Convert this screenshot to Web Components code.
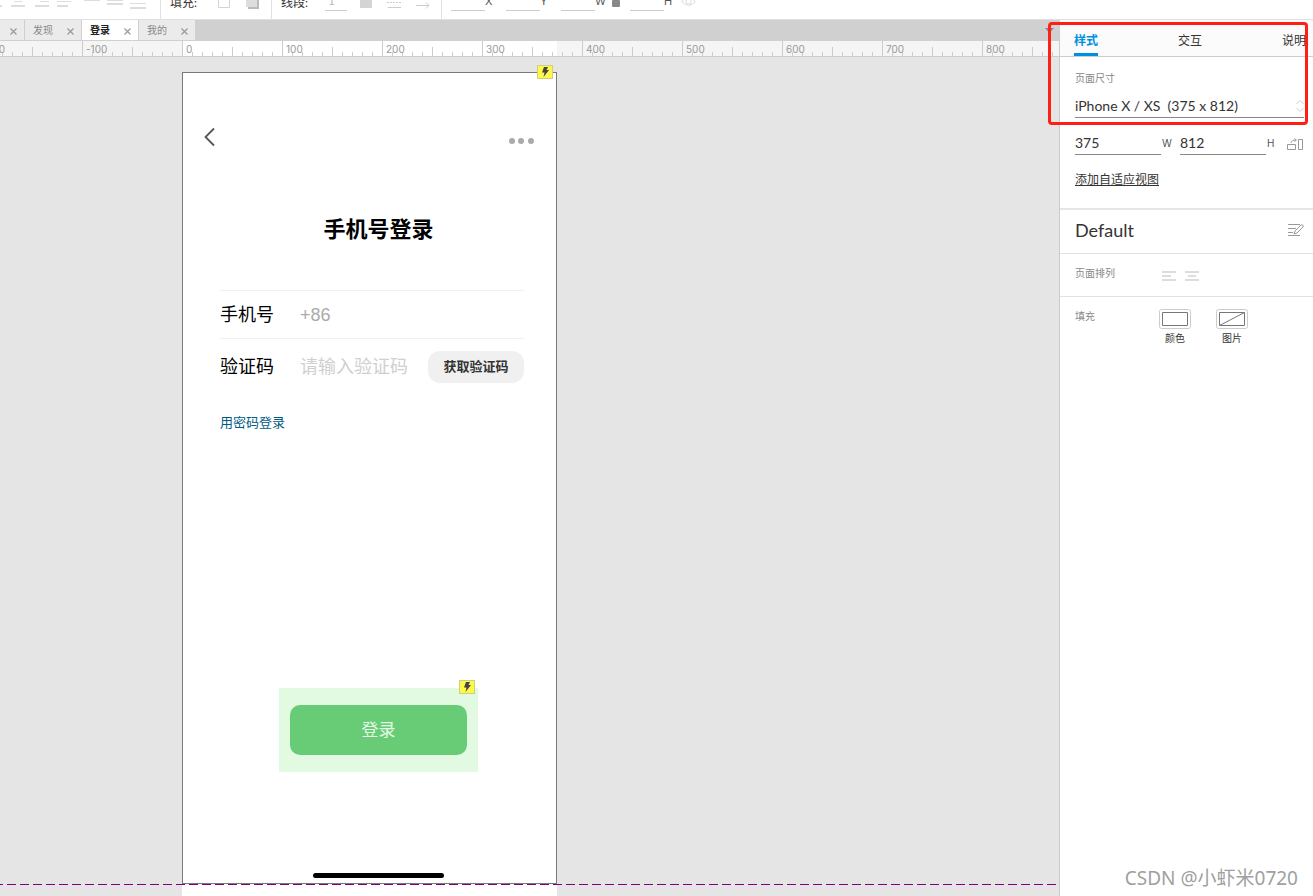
<!DOCTYPE html>
<html lang="zh-CN">
<head>
<meta charset="utf-8">
<title>登录</title>
<style>
  body { margin: 0; background: #fff; color: #333; font: 12px/16px Lato, "Noto Sans CJK SC", sans-serif; }
</style>
</head>
<body>
<editor-app></editor-app>

<script>
const base = `<style>
  *, *::before, *::after { box-sizing: border-box; }
  :host { display: block; box-sizing: border-box; }
  button { font: inherit; color: inherit; background: none; border: 0; padding: 0; margin: 0; cursor: pointer; }
  input, select { font: inherit; color: inherit; background: none; border: 0; padding: 0; margin: 0; outline: 0; min-width: 0; border-radius: 0; }
  svg { display: block; flex: none; }
</style>`;

function define(name, markup, setup) {
  const template = document.createElement('template');
  template.innerHTML = base + markup;
  customElements.define(name, class extends HTMLElement {
    constructor() {
      super();
      this.attachShadow({ mode: 'open' }).append(template.content.cloneNode(true));
    }
    connectedCallback() { if (setup) setup(this, this.shadowRoot); }
  });
}

/* ---------- Toolbar ---------- */
define('tool-group', `<style>
  :host { display: flex; align-items: center; flex: none; height: 32px; border-right: 1px solid #e2e2e2; }
  :host([last]) { border-right: 0; }
</style><slot></slot>`);

define('measure-field', `<style>
  :host { width: 55px; flex: none; }
  label { display: flex; align-items: flex-end; height: 32px; color: #555; }
  input { width: 34px; height: 24px; margin-bottom: 8px; border-bottom: 1px solid #ccc; }
  span { font: 11px/12px Inter, sans-serif; margin-bottom: 12px; }
</style><label><input type="text"><span></span></label>`,
(el, root) => { root.querySelector('span').textContent = el.getAttribute('name'); });

define('tool-bar', `<style>
  :host { display: flex; align-items: flex-end; height: 20px; overflow: hidden; background: #fff; border-bottom: 1px solid #e0e0e0; }
  .label { font-size: 12px; line-height: 16px; }
  .align { width: 161px; gap: 7px; }
  .fill { width: 111px; padding-left: 9px; }
  .line { width: 170px; padding-left: 9px; }
  .size { padding-left: 9px; }
  .fill .label, .line .label { width: 30px; white-space: nowrap; }
  .stroke { align-self: flex-end; width: 22px; height: 20px; margin: 0 0 8px 14px; padding-left: 3px; border-bottom: 1px solid #ccc; color: #bbb; }
  .box { margin-left: 18px; } .shade { margin-left: 15px; }
  .swatch { margin-left: 13px; } .dash { margin-left: 15px; } .arrow { margin-left: 14px; }
  .wide { margin-left: 5px; }
  .lock { margin-left: -4px; margin-right: 9px; }
  .eye { margin-left: -4px; }
</style>
<tool-group class="align">
  <button aria-label="左"><svg width="3" height="32" viewBox="0 -13 3 32" fill="#ddd"><path d="M0 5h2v2H0z"/></svg></button>
  <button aria-label="左对齐"><svg width="16" height="32" viewBox="0 -13 16 32" fill="#ddd"><path d="M4 1h8v1H4zM1 5h14v2H1z"/></svg></button>
  <button aria-label="右对齐"><svg width="16" height="32" viewBox="0 -13 16 32" fill="#ddd"><path d="M7 1h9v1H7zM2 5h14v2H2z"/></svg></button>
  <button aria-label="两端对齐"><svg width="16" height="32" viewBox="0 -13 16 32" fill="#ddd"><path d="M1 1h14v1H1zM1 5h11v2H1z"/></svg></button>
  <button class="wide" aria-label="顶部"><svg width="16" height="32" viewBox="0 -13 16 32" fill="#ddd"><path d="M0 0h16v1H0z"/></svg></button>
  <button aria-label="居中"><svg width="16" height="32" viewBox="0 -13 16 32" fill="#ddd"><path d="M0 0h16v1H0zM0 3h16v2H0z"/></svg></button>
  <button aria-label="底部"><svg width="16" height="32" viewBox="0 -13 16 32" fill="#ddd"><path d="M0 3h16v1H0zM0 7h16v2H0z"/></svg></button>
</tool-group>
<tool-group class="fill">
  <span class="label">填充:</span>
  <button class="box" aria-label="填充颜色"><svg width="13" height="32" viewBox="0 -13 13 32"><path d="M.5-3.5h11v11H.5z" fill="#fff" stroke="#d4d4d4"/></svg></button>
  <button class="shade" aria-label="阴影"><svg width="14" height="32" viewBox="0 -13 14 32"><path d="M2-2h11V9H2z" fill="#bbb"/><path d="M0-4h11V7H0z" fill="#ddd"/></svg></button>
</tool-group>
<tool-group class="line">
  <label class="label" for="stroke">线段:</label>
  <input class="stroke" id="stroke" type="text" value="1">
  <button class="swatch" aria-label="线段颜色"><svg width="12" height="32" viewBox="0 -13 12 32"><path d="M0-4h12V8H0z" fill="#d4d4d4"/></svg></button>
  <button class="dash" aria-label="线段类型"><svg width="15" height="32" viewBox="0 -13 15 32" stroke="#ccc"><path d="M0 2.5h14" stroke-dasharray="2 1"/><path d="M1 7.5h13"/></svg></button>
  <button class="arrow" aria-label="箭头"><svg width="14" height="32" viewBox="0 -13 14 32" stroke="#ccc" fill="none"><path d="M0 5.500h13M10 2.500l3 3-3 3"/></svg></button>
</tool-group>
<tool-group class="size" last>
  <measure-field name="X"></measure-field>
  <measure-field name="Y"></measure-field>
  <measure-field name="W"></measure-field>
  <button class="lock" aria-label="锁定比例"><svg width="9" height="32" viewBox="0 -13 9 32"><rect y="0" width="8" height="7" rx="1" fill="#888"/><path d="M2 0v-3a2 2 0 0 1 4 0v3" fill="none" stroke="#888"/></svg></button>
  <measure-field name="H"></measure-field>
  <button class="eye" aria-label="显示"><svg width="15" height="32" viewBox="0 -13 15 32" fill="none" stroke="#ddd"><path d="M.5 1.500Q7.500-6 14.500 1.500 7.500 9 .5 1.500z"/><circle cx="7.500" cy="1.500" r="2.500"/></svg></button>
</tool-group>`);

/* ---------- Document tabs and ruler ---------- */
define('doc-tab', `<style>
  :host { display: flex; align-items: center; justify-content: space-between; width: 57px; height: 20px; padding: 0 7px 0 8px; background: #ebebeb; color: #888; border-right: 1px solid #d0d0d0; font-size: 10px; line-height: 16px; }
  :host([active]) { background: #fff; color: #222; font-weight: bold; }
  :host([cut]) { width: 25px; }
  button { padding: 2px 0 0; }
</style><slot></slot><button aria-label="关闭"><svg width="7" height="7" viewBox="0 0 7 7" stroke="#999" stroke-width="1.200"><path d="M.5.5l6 6M6.500.5l-6 6"/></svg></button>`);

define('doc-tabs', `<style>
  :host { display: flex; height: 21px; background: #d0d0d0; }
  .menu { margin: 0 5px 0 auto; }
</style>
<doc-tab cut><span></span></doc-tab><doc-tab>发现</doc-tab><doc-tab active>登录</doc-tab><doc-tab>我的</doc-tab>
<button class="menu" aria-label="标签列表"><svg width="9" height="5" viewBox="0 0 9 5"><path d="M0 0h9L4.500 5z" fill="#888"/></svg></button>`);

define('canvas-ruler', `<style>
  :host {
    display: flex; height: 16px; overflow: hidden; border-bottom: 1px solid #ccc; color: #999; font: 10px/16px Inter, sans-serif;
    background:
      linear-gradient(90deg, #ccc 1px, transparent 1px) 2px 100% / 10px 4px repeat-x,
      linear-gradient(90deg, #ccc 1px, transparent 1px) 32px 100% / 50px 9px repeat-x,
      linear-gradient(90deg, #ccc 1px, transparent 1px) 82px 0 / 100px 16px repeat-x,
      linear-gradient(#fff, #fff) 182px 0 / 375px 16px no-repeat, #f5f5f5;
  }
  .scale { display: flex; margin-left: -18px; }
  .scale span { flex: none; width: 100px; padding-left: 4px; }
  .scale span:first-child { padding-left: 0; }
</style><div class="scale"></div>`,
(el, root) => {
  const scale = root.querySelector('.scale');
  for (let n = -200; n <= 800; n += 100) {
    const mark = document.createElement('span');
    mark.textContent = n;
    scale.append(mark);
  }
});

/* ---------- Phone page ---------- */
define('event-badge', `<style>
  :host { position: absolute; top: -8px; right: 3px; width: 16px; height: 14px; background: #fff84a; border: 1px solid #cfcf80; }
  svg { margin: 1px auto 0; }
</style><svg width="8" height="10" viewBox="0 0 8 10"><path d="M3 0h4L5.500 3H8L2.500 10l1-4.500H1z" fill="#444"/></svg>`);

define('form-row', `<style>
  :host { display: flex; align-items: center; height: 48px; border-top: 1px solid #f0f0f0; color: #000; font: 18px/24px "Liberation Sans", "Noto Sans CJK SC", sans-serif; }
  :host([tall]) { height: 57px; }
  label { flex: none; width: 80px; }
  input { flex: 1; width: 0; height: 24px; }
  input::placeholder { color: var(--hint, #aaa); opacity: 1; }
</style><label for="field"></label><input id="field" type="text"><slot></slot>`,
(el, root) => {
  root.querySelector('label').textContent = el.getAttribute('label');
  root.querySelector('input').placeholder = el.getAttribute('hint');
});

define('phone-page', `<style>
  :host { position: relative; display: flex; flex-direction: column; height: 812px; background: #fff; border: 1px solid #7a7a7a; }
  header { display: flex; justify-content: space-between; align-items: flex-end; margin-top: 54px; padding: 0 22px 0 20px; }
  h1 { margin: 66px 0 0; padding-left: 18px; text-align: center; font-size: 22px; line-height: 32px; font-weight: bold; color: #000; }
  form { margin: 45px 32px 0 37px; }
  form-row[tall] { --hint: #d0d0d0; }
  .code { flex: none; width: 96px; height: 32px; padding-bottom: 3px; border-radius: 12px; background: #f0f0f0; font: bold 13px/18px "Noto Sans CJK SC", sans-serif; color: #333; }
  a { display: inline-block; margin-top: 17px; font-size: 13px; line-height: 20px; color: #005a82; text-decoration: none; }
  .login { position: relative; align-self: center; margin: 256px 0 0 18px; padding: 17px 11px; background: #e2fae2; }
  .login button { display: block; width: 177px; height: 50px; border-radius: 10px; background: #67cc75; color: #e6f9e6; font-size: 17px; line-height: 24px; }
  .home { align-self: center; width: 131px; height: 5px; margin: auto 0 5px 18px; border-radius: 3px; background: #000; }
</style>
<header>
  <button aria-label="返回"><svg width="13" height="20" viewBox="0 0 13 20" fill="none" stroke="#555" stroke-width="1.800"><path d="M11 1.500L2.500 10l8.500 8.500"/></svg></button>
  <button aria-label="更多"><svg width="26" height="14" viewBox="0 0 26 14" fill="#aaa"><circle cx="4" cy="8" r="3"/><circle cx="13" cy="8" r="3"/><circle cx="23" cy="8" r="3"/></svg></button>
</header>
<h1>手机号登录</h1>
<form>
  <form-row label="手机号" hint="+86"></form-row>
  <form-row tall label="验证码" hint="请输入验证码"><button class="code" type="button">获取验证码</button></form-row>
  <a href="#password">用密码登录</a>
</form>
<div class="login"><button type="button">登录</button><event-badge></event-badge></div>
<div class="home"></div>
<event-badge></event-badge>`);

define('design-canvas', `<style>
  :host { position: relative; display: flex; flex: 1; overflow: hidden; background: #e5e5e5; }
  .column { width: 375px; margin: 15px 0 0 182px; background: #fff; }
  .fold { position: absolute; left: 0; right: 0; top: 827px; height: 1px; background: repeating-linear-gradient(90deg, #800080 0 9px, transparent 9px 13px) -6px 0; background-size: 2600px 1px; }
</style>
<div class="column"><phone-page></phone-page></div><div class="fold"></div>`);

/* ---------- Inspector ---------- */
define('panel-tabs', `<style>
  :host { display: flex; gap: 80px; height: 37px; padding-left: 14px; overflow: hidden; background: #fbfbfb; border-bottom: 1px solid #ccc; }
  button { flex: none; height: 36px; padding: 8px 0 0; border-bottom: 3px solid transparent; line-height: 16px; }
  .on { color: #008fe0; border-color: #008fe0; font-weight: bold; }
</style><button class="on">样式</button><button>交互</button><button>说明</button>`);

define('page-size', `<style>
  :host { height: 153px; padding: 13px 9px 0 15px; border-bottom: 2px solid #e5e5e5; font-size: 14px; line-height: 20px; }
  .title { display: block; font-size: 10px; line-height: 16px; color: #888; }
  .preset { display: flex; align-items: center; margin-top: 8px; height: 24px; border-bottom: 1px solid #888; }
  select { flex: 1; height: 20px; appearance: none; white-space: pre; font-size: 14px; }
  .dims { display: flex; align-items: center; margin-top: 13px; }
  .dims label { display: flex; align-items: center; gap: 1px; width: 105px; color: #555; font: 10px/12px Inter, sans-serif; }
  input { width: 86px; height: 24px; border-bottom: 1px solid #888; color: #333; font: 14px/20px Lato, sans-serif; }
  .dims button { margin: 3px 0 0 auto; }
  a { display: inline-block; margin-top: 17px; font-size: 12px; line-height: 16px; color: #333; text-decoration: underline; }
</style>
<label class="title" for="preset">页面尺寸</label>
<div class="preset"><select id="preset"><option>iPhone X / XS &nbsp;(375 x 812)</option></select>
  <svg width="8" height="14" viewBox="0 0 8 14" fill="none" stroke="#ccc"><path d="M.5 5L4 1.500 7.500 5M.5 9L4 12.500 7.500 9"/></svg></div>
<div class="dims">
  <label><input type="text" value="375">W</label>
  <label><input type="text" value="812">H</label>
  <button aria-label="旋转"><svg width="17" height="13" viewBox="0 0 17 13" fill="none" stroke="#999"><path d="M.5 6.500h8v5h-8zM11.500 1.500h4v10h-4zM4 5c0-2 2-3 5-3M7.500.5l2 1.500-2 1.500"/></svg></button>
</div>
<a href="#adaptive">添加自适应视图</a>`);

define('style-panel', `<style>
  :host { position: relative; flex: none; width: 254px; background: #fff; border-left: 1px solid #ccc; }
  .row { display: flex; padding: 0 9px 0 15px; border-bottom: 1px solid #e2e2e2; }
  .name { height: 44px; padding-bottom: 3px; align-items: center; justify-content: space-between; }
  h2 { margin: 0; font-size: 18px; line-height: 24px; font-weight: normal; }
  h3 { flex: none; width: 84px; margin: 0; font-size: 10px; line-height: 16px; font-weight: normal; color: #888; }
  .arrange { height: 43px; padding-top: 11px; }
  .arrange button { width: 15px; height: 20px; margin: 0 5px 0 3px; }
  .fill { padding-top: 12px; border: 0; }
  .fill h3 { line-height: 14px; }
  .fill button { display: flex; flex-direction: column; align-items: center; width: 32px; margin-right: 25px; font-size: 10px; line-height: 16px; gap: 1px; }
  .mark { position: absolute; top: 2px; left: -12px; width: 260px; height: 103px; border: 3px solid #ff2015; border-radius: 4px; pointer-events: none; }
</style>
<panel-tabs></panel-tabs>
<page-size></page-size>
<div class="row name"><h2>Default</h2><button aria-label="编辑样式"><svg width="16" height="14" viewBox="0 0 16 14" fill="none" stroke="#999"><path d="M0 1.500h12M0 5.500h8M0 9.500h5M0 12.500h12"/><path d="M6 11l1-3 6-6c1-1 3 .5 2 2L9 10z" fill="#fff"/></svg></button></div>
<div class="row arrange"><h3>页面排列</h3>
  <button aria-label="左对齐"><svg width="14" height="20" viewBox="0 0 14 20" fill="#ddd"><path d="M0 6h14v2H0zM0 10h9v2H0zM0 14h14v2H0z"/></svg></button>
  <button aria-label="居中"><svg width="14" height="20" viewBox="0 0 14 20" fill="#ddd"><path d="M0 6h14v2H0zM3 10h8v2H3zM0 14h14v2H0z"/></svg></button>
</div>
<div class="row fill"><h3>填充</h3>
  <button><svg width="32" height="20" viewBox="0 0 32 20" fill="none"><rect x=".5" y=".5" width="31" height="19" rx="2" stroke="#ccc"/><path d="M3.500 3.500h25v13h-25z" stroke="#777"/></svg>颜色</button>
  <button><svg width="32" height="20" viewBox="0 0 32 20" fill="none"><rect x=".5" y=".5" width="31" height="19" rx="2" stroke="#ccc"/><path d="M3.500 3.500h25v13h-25zM3.500 16.500l25-13" stroke="#777"/></svg>图片</button>
</div>
<div class="mark"></div>`);

/* ---------- Shell ---------- */
define('editor-app', `<style>
  :host { position: relative; display: flex; flex-direction: column; min-height: 100vh; overflow: hidden; }
  .body { display: flex; flex: 1; }
  main { display: flex; flex-direction: column; flex: 1; min-width: 0; }
  .credit { position: absolute; right: 15px; bottom: 5px; font: 19px/26px "Noto Sans", "Noto Sans CJK SC", sans-serif; color: #a0a0a0; }
</style>
<tool-bar></tool-bar>
<div class="body">
  <main><doc-tabs></doc-tabs><canvas-ruler></canvas-ruler><design-canvas></design-canvas></main>
  <style-panel></style-panel>
</div>
<div class="credit">CSDN @小虾米0720</div>`);
</script>
</body>
</html>
